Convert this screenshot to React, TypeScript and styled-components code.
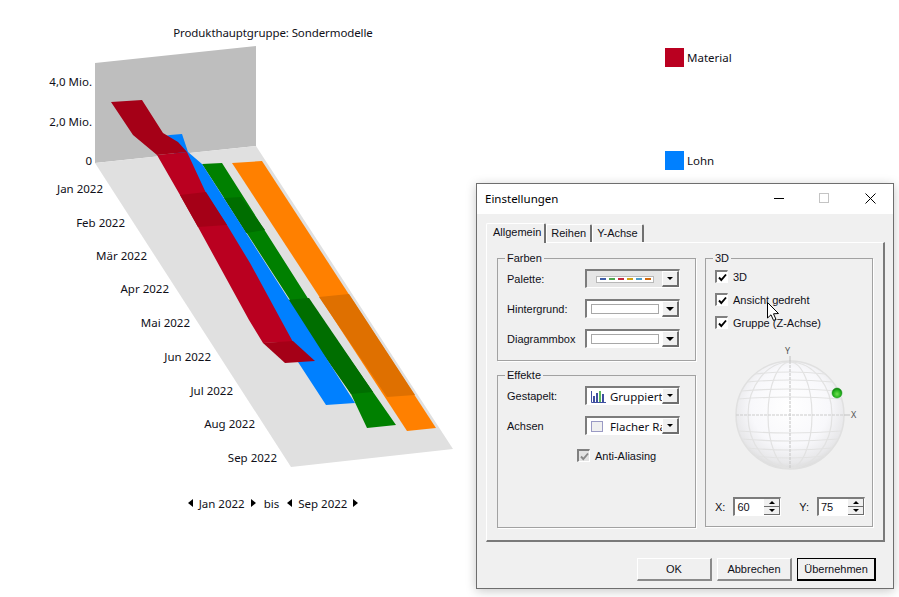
import React from 'react';
import styled, { createGlobalStyle } from 'styled-components';

const FONT = '"Noto Sans", "Open Sans", sans-serif';
const DIALOG_FONT = '"Liberation Sans", Arial, sans-serif';

const GlobalStyle = createGlobalStyle`
    html, body {
        margin: 0;
        width: 899px;
        height: 597px;
        overflow: hidden;
        background: #fff;
        font-family: ${FONT};
        font-size: 11.5px;
        color: #101018;
    }
`;

const months = [
    { name: 'Jan 2022', x: 103, y: 193 },
    { name: 'Feb 2022', x: 125, y: 227 },
    { name: 'Mär 2022', x: 147, y: 260 },
    { name: 'Apr 2022', x: 169, y: 293 },
    { name: 'Mai 2022', x: 190, y: 327 },
    { name: 'Jun 2022', x: 211, y: 361 },
    { name: 'Jul 2022', x: 233, y: 395 },
    { name: 'Aug 2022', x: 255, y: 428 },
    { name: 'Sep 2022', x: 277, y: 462 },
];

const yTicks = [
    { label: '4,0 Mio.', y: 86 },
    { label: '2,0 Mio.', y: 126 },
    { label: '0', y: 165 },
];

const Chart3D = () => (
    <ChartSvg viewBox="0 42 546 450" width={546} height={450}>
        <polygon points="95,63 256,46 256,146 95,163" fill="#bebebe" />
        <polygon points="95,163 256,146 453,449 291,467" fill="#e0e0e0" />

        <polygon points="232,163 262,161 436,428 407,431" fill="#ff8000" />
        <polygon points="319,297 349,294 415,395 387,397" fill="#df7000" />

        <polygon points="202,164 222,163 309,300 396,425 367,428 351,394" fill="#008000" />
        <polygon points="224,198 241,197 265,230 246,233" fill="#006e00" />
        <polygon points="285,300 309,298 373,392 351,394" fill="#006e00" />

        <polygon points="165,136 170,135 182,134 188,152 202,164 355,403 326,405 298,362 250,300" fill="#0080ff" />

        <polygon
            points="157,155 187,152 206,193 227,225 250,263 281,320 293,342 263,343 249,320 198,227 180,195"
            fill="#ba0020"
        />
        <polygon points="111,102 142,100 163,133 178,142 187,152 157,155 133,135" fill="#a50017" />
        <polygon points="180,195 206,192 227,225 198,227" fill="#a50017" />
        <polygon points="263,343 293,341 315,361 285,363" fill="#a50017" />

        {yTicks.map((tick) => (
            <AxisLabel key={tick.label} x={92} y={tick.y}>
                {tick.label}
            </AxisLabel>
        ))}
        {months.map((month) => (
            <AxisLabel key={month.name} x={month.x} y={month.y}>
                {month.name}
            </AxisLabel>
        ))}
    </ChartSvg>
);

const Sphere = () => {
    const latitudes = [-41, -33, -24, -16, 16, 24, 33, 41];
    return (
        <SphereSvg viewBox="0 0 132 135" width={132} height={135}>
            <defs>
                <radialGradient id="ball" cx="0.5" cy="0.42" r="0.58">
                    <stop offset="0" stopColor="#ffffff" />
                    <stop offset="0.62" stopColor="#f8f8fb" />
                    <stop offset="0.9" stopColor="#e8e8ea" />
                    <stop offset="1" stopColor="#dcdcdc" />
                </radialGradient>
                <radialGradient id="knob" cx="0.5" cy="0.6" r="0.55">
                    <stop offset="0" stopColor="#6fe04f" />
                    <stop offset="0.7" stopColor="#22b01c" />
                    <stop offset="1" stopColor="#128012" />
                </radialGradient>
            </defs>
            <circle cx="60" cy="70" r="54" fill="url(#ball)" stroke="#e0e0e0" strokeWidth="1.5" />
            <g fill="none" stroke="#e2e2e2" strokeWidth="1.2">
                <ellipse cx="60" cy="70" rx="22" ry="53" />
                <ellipse cx="60" cy="70" rx="42" ry="53" />
                {latitudes.map((offset) => {
                    const half = Math.sqrt(54 * 54 - offset * offset);
                    const bend = offset < 0 ? -4 : 4;
                    return (
                        <path
                            key={offset}
                            d={`M${60 - half} ${70 + offset}Q60 ${70 + offset + bend} ${60 + half} ${70 + offset}`}
                        />
                    );
                })}
            </g>
            <g stroke="#cccccc" strokeWidth="1.2" strokeDasharray="3 1">
                <line x1="6" y1="70" x2="114" y2="70" />
                <line x1="60" y1="16" x2="60" y2="124" />
            </g>
            <line x1="60" y1="11" x2="60" y2="16" stroke="#c0c0c0" />
            <line x1="114" y1="70" x2="120" y2="70" stroke="#c0c0c0" />
            <SphereAxis x="55" y="9">Y</SphereAxis>
            <SphereAxis x="121" y="73">X</SphereAxis>
            <circle cx="107" cy="48" r="5" fill="url(#knob)" stroke="#1a9a1a" strokeWidth="0.5" />
        </SphereSvg>
    );
};

const paletteColors = ['#3f5ea8', '#4ea64e', '#c4283c', '#d0a010', '#4a9cc8', '#d0680c'];

const Combo = ({ small, children }: { small?: boolean; children: React.ReactNode }) => (
    <ComboBox>
        <ComboValue>{children}</ComboValue>
        <ComboButton>
            <ArrowDown $size={small ? 3 : 4} />
        </ComboButton>
    </ComboBox>
);

const Check = ({ disabled, children }: { disabled?: boolean; children: string }) => (
    <CheckRow>
        <CheckBox $disabled={disabled}>
            <svg width="9" height="9" viewBox="0 0 9 9">
                <path
                    d="M1 4.5 L3.3 7 L8 1.5"
                    fill="none"
                    stroke={disabled ? '#8a8a8a' : '#000'}
                    strokeWidth="1.9"
                />
            </svg>
        </CheckBox>
        {children}
    </CheckRow>
);

const Spinner = ({ value }: { value: string }) => (
    <SpinBox>
        <SpinValue>{value}</SpinValue>
        <SpinButtons>
            <SpinButton>
                <SpinUp />
            </SpinButton>
            <SpinButton>
                <SpinDown />
            </SpinButton>
        </SpinButtons>
    </SpinBox>
);

const App = () => (
    <Page>
        <GlobalStyle />
        <ChartColumn>
            <ChartTitle>Produkthauptgruppe: Sondermodelle</ChartTitle>
            <Chart3D />
            <RangeBar>
                <RangeField>
                    <ArrowLeft />
                    Jan 2022
                    <ArrowRight />
                </RangeField>
                bis
                <RangeField>
                    <ArrowLeft />
                    Sep 2022
                    <ArrowRight />
                </RangeField>
            </RangeBar>
        </ChartColumn>
        <Legend>
            <LegendItem>
                <LegendSwatch $color="#ba0020" />
                Material
            </LegendItem>
            <LegendItem>
                <LegendSwatch $color="#0080ff" />
                Lohn
            </LegendItem>
        </Legend>

        <Dialog>
            <TitleBar>
                <TitleText>Einstellungen</TitleText>
                <WindowButtons>
                    <svg width="11" height="11" viewBox="0 0 11 11">
                        <line x1="1" y1="5.5" x2="11" y2="5.5" stroke="#000" />
                    </svg>
                    <svg width="11" height="11" viewBox="0 0 11 11">
                        <rect x="0.5" y="0.5" width="9" height="9" fill="none" stroke="#c4c4c4" />
                    </svg>
                    <svg width="11" height="11" viewBox="0 0 11 11">
                        <path d="M0.5 0.5 L10.5 10.5 M10.5 0.5 L0.5 10.5" stroke="#000" fill="none" />
                    </svg>
                </WindowButtons>
            </TitleBar>
            <DialogBody>
                <Tabs>
                    <Tab $active>Allgemein</Tab>
                    <Tab>Reihen</Tab>
                    <Tab>Y-Achse</Tab>
                </Tabs>
                <TabPanel>
                    <LeftColumn>
                        <Group $height={103}>
                            <GroupTitle>Farben</GroupTitle>
                            <FormRow>
                                <FieldLabel>Palette:</FieldLabel>
                                <Combo small>
                                    <PalettePreview>
                                        {paletteColors.map((color) => (
                                            <PaletteDash key={color} $color={color} />
                                        ))}
                                    </PalettePreview>
                                </Combo>
                            </FormRow>
                            <FormRow>
                                <FieldLabel>Hintergrund:</FieldLabel>
                                <Combo>
                                    <ColorPreview />
                                </Combo>
                            </FormRow>
                            <FormRow>
                                <FieldLabel>Diagrammbox</FieldLabel>
                                <Combo>
                                    <ColorPreview />
                                </Combo>
                            </FormRow>
                        </Group>
                        <Group $height={153}>
                            <GroupTitle>Effekte</GroupTitle>
                            <FormRow>
                                <FieldLabel>Gestapelt:</FieldLabel>
                                <Combo small>
                                    <ComboIcon>
                                        <svg width="15" height="13" viewBox="0 0 15 13">
                                            <path d="M0.5 1V12.5H15" fill="none" stroke="#3f4fa0" />
                                            <rect x="2" y="6" width="2" height="6" fill="#3f4fa0" />
                                            <rect x="5" y="3" width="2" height="9" fill="#3f4fa0" />
                                            <rect x="8" y="1" width="2" height="11" fill="#5cb85c" />
                                            <rect x="11" y="4" width="2" height="8" fill="#3f4fa0" />
                                        </svg>
                                    </ComboIcon>
                                    Gruppiert
                                </Combo>
                            </FormRow>
                            <FormRow>
                                <FieldLabel>Achsen</FieldLabel>
                                <Combo small>
                                    <ComboIcon>
                                        <AxisBoxIcon />
                                    </ComboIcon>
                                    Flacher Ra
                                </Combo>
                            </FormRow>
                            <AntiAliasRow>
                                <Check disabled>Anti-Aliasing</Check>
                            </AntiAliasRow>
                        </Group>
                    </LeftColumn>
                    <RightColumn>
                        <Group $height={269}>
                            <GroupTitle>3D</GroupTitle>
                            <CheckList>
                                <Check>3D</Check>
                                <Check>Ansicht gedreht</Check>
                                <Check>Gruppe (Z-Achse)</Check>
                            </CheckList>
                            <SphereWrap>
                                <Sphere />
                            </SphereWrap>
                            <SpinnerRow>
                                <SpinnerField>
                                    X:
                                    <Spinner value="60" />
                                </SpinnerField>
                                <SpinnerField>
                                    Y:
                                    <Spinner value="75" />
                                </SpinnerField>
                            </SpinnerRow>
                        </Group>
                    </RightColumn>
                </TabPanel>
                <Footer>
                    <DialogButton $width={75}>OK</DialogButton>
                    <DialogButton $width={75}>Abbrechen</DialogButton>
                    <DialogButton $width={79} $default>
                        Übernehmen
                    </DialogButton>
                </Footer>
            </DialogBody>
        </Dialog>

        <Cursor width="14" height="20" viewBox="0 0 14 20">
            <path
                d="M0.5 0.5 V16 L4 12.8 L6.6 18.5 L9 17.4 L6.5 11.8 L11.5 11.5 Z"
                fill="#fff"
                stroke="#000"
                strokeWidth="1"
            />
        </Cursor>
    </Page>
);

const Page = styled.div`
    position: relative;
    display: flex;
    width: 899px;
    height: 597px;
    overflow: hidden;
    background: #fff;
`;

const ChartColumn = styled.div`
    display: flex;
    flex-direction: column;
    width: 546px;
    flex: none;
    padding-top: 24px;
`;

const ChartTitle = styled.div`
    height: 18px;
    line-height: 18px;
    text-align: center;
    letter-spacing: -0.1px;
`;

const ChartSvg = styled.svg`
    display: block;
    flex: none;
`;

const AxisLabel = styled.text`
    font-family: ${FONT};
    font-size: 11.5px;
    fill: #101018;
    text-anchor: end;
`;

const RangeBar = styled.div`
    display: flex;
    align-items: center;
    justify-content: center;
    gap: 8px;
    height: 18px;
    margin-top: 2px;
`;

const RangeField = styled.div`
    display: flex;
    align-items: center;
    gap: 6px;
`;

const ArrowLeft = styled.span`
    width: 0;
    height: 0;
    border-top: 4px solid transparent;
    border-bottom: 4px solid transparent;
    border-right: 5px solid #000;
`;

const ArrowRight = styled.span`
    width: 0;
    height: 0;
    border-top: 4px solid transparent;
    border-bottom: 4px solid transparent;
    border-left: 5px solid #000;
`;

const Legend = styled.div`
    display: flex;
    flex-direction: column;
    gap: 84px;
    margin-left: 119px;
    padding-top: 48px;
`;

const LegendItem = styled.div`
    display: flex;
    align-items: center;
    gap: 3px;
    height: 19px;
`;

const LegendSwatch = styled.span<{ $color: string }>`
    width: 19px;
    height: 19px;
    background: ${({ $color }) => $color};
`;

const Dialog = styled.div`
    position: absolute;
    left: 476px;
    top: 183px;
    width: 418px;
    height: 406px;
    box-sizing: border-box;
    display: flex;
    flex-direction: column;
    background: #f0f0f0;
    border: 1px solid #6e6e6e;
    box-shadow: 0 2px 10px rgba(0, 0, 0, 0.22);
    font-family: ${DIALOG_FONT};
    font-size: 11px;
`;

const TitleBar = styled.div`
    box-sizing: border-box;
    display: flex;
    align-items: center;
    justify-content: space-between;
    height: 30px;
    flex: none;
    padding: 0 17px 2px 8px;
    background: #fff;
`;

const TitleText = styled.span`
    font-family: ${FONT};
    font-size: 11.5px;
    color: #000;
`;

const WindowButtons = styled.div`
    display: flex;
    align-items: center;
    gap: 35px;

    svg {
        display: block;
    }
`;

const DialogBody = styled.div`
    flex: 1;
    display: flex;
    flex-direction: column;
    padding: 9px 8px 0 9px;
`;

const Tabs = styled.div`
    display: flex;
    align-items: flex-end;
    height: 19px;
    flex: none;
`;

const Tab = styled.div<{ $active?: boolean }>`
    box-sizing: border-box;
    height: ${({ $active }) => ($active ? '20px' : '18px')};
    margin-bottom: ${({ $active }) => ($active ? '-1px' : '0')};
    padding: ${({ $active }) => ($active ? '0 3px 0 6px' : '0 4px')};
    line-height: 17px;
    background: #f0f0f0;
    border-top: 1px solid #fff;
    border-left: 1px solid #fff;
    border-right: 2px solid #707070;
    border-radius: 2px 2px 0 0;
    position: relative;
    z-index: ${({ $active }) => ($active ? 1 : 0)};
`;

const TabPanel = styled.div`
    box-sizing: border-box;
    display: flex;
    gap: 9px;
    width: 399px;
    height: 300px;
    flex: none;
    padding: 15px 0 0 10px;
    border-top: 1px solid #fff;
    border-left: 1px solid #fff;
    border-right: 2px solid #7a7a7a;
    border-bottom: 2px solid #7a7a7a;
`;

const LeftColumn = styled.div`
    display: flex;
    flex-direction: column;
    gap: 14px;
    width: 199px;
    flex: none;
`;

const RightColumn = styled.div`
    width: 168px;
    flex: none;
`;

const Group = styled.div<{ $height: number }>`
    position: relative;
    box-sizing: border-box;
    flex: none;
    height: ${({ $height }) => $height}px;
    padding: 10px 7px 0 9px;
    border: 1px solid #a2a2a2;
    box-shadow: 1px 1px 0 #fff;
    display: flex;
    flex-direction: column;
    gap: 11px;
`;

const GroupTitle = styled.span`
    position: absolute;
    left: 7px;
    top: -9px;
    padding: 0 2px;
    line-height: 16px;
    background: #f0f0f0;
`;

const FormRow = styled.div`
    display: flex;
    align-items: center;
    height: 19px;
    flex: none;
`;

const FieldLabel = styled.span`
    width: 78px;
    flex: none;
    padding-top: 1px;
    white-space: nowrap;
`;

const ComboBox = styled.div`
    box-sizing: border-box;
    display: flex;
    align-items: stretch;
    width: 95px;
    height: 19px;
    background: #fff;
    border-top: 2px solid #7c7c7c;
    border-left: 2px solid #7c7c7c;
    border-right: 1px solid #fff;
    border-bottom: 1px solid #fff;
`;

const ComboValue = styled.div`
    flex: 1;
    min-width: 0;
    display: flex;
    align-items: center;
    overflow: hidden;
    white-space: nowrap;
    font-family: ${FONT};
    font-size: 11.5px;
`;

const ComboButton = styled.div`
    box-sizing: border-box;
    width: 17px;
    flex: none;
    display: flex;
    align-items: center;
    justify-content: center;
    background: #f0f0f0;
    border-right: 2px solid #6e6e6e;
    border-bottom: 2px solid #6e6e6e;
    border-top: 1px solid #fff;
    border-left: 1px solid #fff;
`;

const ArrowDown = styled.span<{ $size: number }>`
    width: 0;
    height: 0;
    border-left: ${({ $size }) => $size}px solid transparent;
    border-right: ${({ $size }) => $size}px solid transparent;
    border-top: ${({ $size }) => $size}px solid #000;
`;

const PalettePreview = styled.div`
    box-sizing: border-box;
    display: flex;
    align-items: center;
    justify-content: center;
    gap: 3px;
    width: 58px;
    height: 7px;
    margin-left: 9px;
    background: #fff;
    border: 1px solid #b8b8b8;
    box-shadow: 0 0 0 9px #e6e6e6;
`;

const PaletteDash = styled.span<{ $color: string }>`
    width: 6px;
    height: 2px;
    background: ${({ $color }) => $color};
`;

const ColorPreview = styled.div`
    box-sizing: border-box;
    width: 68px;
    height: 10px;
    margin-left: 4px;
    background: #fff;
    border: 1px solid #a8a8a8;
`;

const ComboIcon = styled.span`
    display: flex;
    align-items: center;
    width: 19px;
    margin-left: 4px;
    flex: none;
`;

const AxisBoxIcon = styled.span`
    box-sizing: border-box;
    width: 12px;
    height: 11px;
    border: 1px solid #9a9ac4;
    background: #f0f0f0;
`;

const AntiAliasRow = styled.div`
    padding: 3px 0 0 70px;
`;

const CheckList = styled.div`
    display: flex;
    flex-direction: column;
    gap: 10px;
    padding-top: 1px;
`;

const CheckRow = styled.div`
    display: flex;
    align-items: center;
    gap: 5px;
    height: 13px;
    white-space: nowrap;
`;

const CheckBox = styled.span<{ $disabled?: boolean }>`
    box-sizing: border-box;
    width: 13px;
    height: 13px;
    flex: none;
    display: flex;
    align-items: center;
    justify-content: center;
    background: ${({ $disabled }) => ($disabled ? '#e4e4e4' : '#fff')};
    border-top: 2px solid #808080;
    border-left: 2px solid #808080;
    border-right: 1px solid #fff;
    border-bottom: 1px solid #fff;
`;

const SphereWrap = styled.div`
    display: flex;
    margin-top: 5px;
    padding-left: 15px;
`;

const SphereSvg = styled.svg`
    display: block;
`;

const SphereAxis = styled.text`
    font-family: ${FONT};
    font-size: 9px;
    fill: #555;
`;

const SpinnerRow = styled.div`
    display: flex;
    justify-content: space-between;
    margin-top: 6px;
`;

const SpinnerField = styled.div`
    display: flex;
    align-items: center;
    gap: 8px;
`;

const SpinBox = styled.div`
    box-sizing: border-box;
    display: flex;
    width: 48px;
    height: 19px;
    background: #fff;
    border-top: 2px solid #7c7c7c;
    border-left: 2px solid #7c7c7c;
    border-right: 1px solid #fff;
    border-bottom: 1px solid #fff;
`;

const SpinValue = styled.div`
    flex: 1;
    padding-left: 2px;
    line-height: 16px;
`;

const SpinButtons = styled.div`
    display: flex;
    flex-direction: column;
    width: 16px;
`;

const SpinButton = styled.div`
    box-sizing: border-box;
    flex: 1;
    display: flex;
    align-items: center;
    justify-content: center;
    background: #f0f0f0;
    border-right: 1px solid #6e6e6e;
    border-bottom: 1px solid #6e6e6e;
`;

const SpinUp = styled.span`
    width: 0;
    height: 0;
    border-left: 3px solid transparent;
    border-right: 3px solid transparent;
    border-bottom: 3px solid #000;
`;

const SpinDown = styled.span`
    width: 0;
    height: 0;
    border-left: 3px solid transparent;
    border-right: 3px solid transparent;
    border-top: 3px solid #000;
`;

const Footer = styled.div`
    display: flex;
    justify-content: flex-end;
    gap: 5px;
    padding: 16px 9px 0 0;
`;

const DialogButton = styled.div<{ $width: number; $default?: boolean }>`
    box-sizing: border-box;
    width: ${({ $width }) => $width}px;
    height: 23px;
    display: flex;
    align-items: center;
    justify-content: center;
    background: #f0f0f0;
    border-top: 1px solid ${({ $default }) => ($default ? '#000' : '#fff')};
    border-left: 1px solid ${({ $default }) => ($default ? '#000' : '#fff')};
    border-right: ${({ $default }) => ($default ? '2px solid #000' : '2px solid #8a8a8a')};
    border-bottom: ${({ $default }) => ($default ? '2px solid #000' : '2px solid #8a8a8a')};
`;

const Cursor = styled.svg`
    position: absolute;
    left: 767px;
    top: 302px;
    pointer-events: none;
`;

export default App;
